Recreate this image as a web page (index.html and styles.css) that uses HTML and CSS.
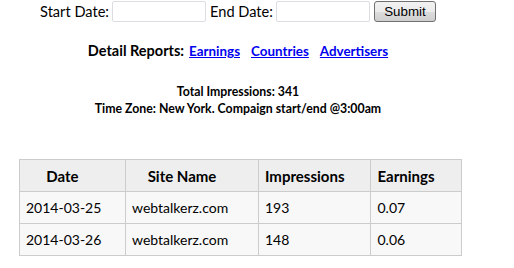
FILE: index.html
```html
<!DOCTYPE html>
<html lang="en">

<head>
    <meta charset="UTF-8">
    <title>Site Report</title>
    <link rel="stylesheet" href="styles.css">
</head>

<body>
    <div id="wrap">
        <form class="search">
            <label>Start Date:</label>
            <input type="text" class="date">
            <label>End Date:</label>
            <input type="text" class="date">
            <button type="button" class="submit">Submit</button>
        </form>
        <div class="reports">
            <span>Detail Reports:</span><a href="#">Earnings</a><a href="#">Countries</a><a href="#">Advertisers</a>
        </div>
        <div class="summary">
            <p>Total Impressions: 341</p>
            <p>Time Zone: New York. Compaign start/end @3:00am</p>
        </div>
        <table class="stats">
            <thead>
                <tr>
                    <th class="c-date">Date</th>
                    <th class="c-site">Site Name</th>
                    <th class="c-imp">Impressions</th>
                    <th class="c-earn">Earnings</th>
                </tr>
            </thead>
            <tbody>
                <tr>
                    <td>2014-03-25</td>
                    <td>webtalkerz.com</td>
                    <td>193</td>
                    <td>0.07</td>
                </tr>
                <tr>
                    <td>2014-03-26</td>
                    <td>webtalkerz.com</td>
                    <td>148</td>
                    <td>0.06</td>
                </tr>
            </tbody>
        </table>
    </div>
</body>

</html>
```

FILE: styles.css
```css
* {
    margin: 0;
    padding: 0;
}

body {
    font-family: Lato, "Open Sans", sans-serif;
    color: #000;
    background: #fff;
}

#wrap {
    width: 476px;
    text-align: center;
}

.search {
    height: 22px;
    display: flex;
    justify-content: center;
    align-items: center;
    font-size: 14.6px;
}

.search label {
    margin-right: 3px;
}

.search .date {
    width: 94px;
    height: 21px;
    box-sizing: border-box;
    border: 1px solid #dcdde3;
    border-radius: 2px;
    margin-right: 4px;
    outline: none;
}

.search .submit {
    width: 62px;
    height: 21px;
    font-family: "Liberation Sans", Arial, sans-serif;
    font-size: 13.3px;
    color: #000;
    border: 1px solid #707070;
    border-radius: 3px;
    background: linear-gradient(#f2f2f2, #ebebeb 50%, #dddddd 51%, #cfcfcf);
}

.reports {
    margin-top: 20px;
    font-size: 14.5px;
    font-weight: bold;
}

.reports a {
    color: #0000ee;
    font-size: 13.4px;
    margin-left: 11px;
}

.reports span + a {
    margin-left: 5px;
}

.summary {
    margin-top: 24px;
    font-size: 12.3px;
    font-weight: bold;
    line-height: 17px;
}

.stats {
    margin: 42px 0 0 19px;
    border-collapse: collapse;
    text-align: left;
    font-size: 14px;
}

.stats th,
.stats td {
    height: 31px;
    border: 1px solid #ccc;
    padding: 0 6px;
}

.stats th {
    background: #eeeeee;
    text-align: center;
    font-size: 15px;
    padding: 0 26px 0 6px;
}

.stats td {
    background: #f8f8f8;
}

.stats .c-date {
    width: 73px;
}

.stats .c-site {
    width: 100px;
}

.stats .c-imp {
    width: 78px;
}

.stats .c-earn {
    width: 55px;
}
```
